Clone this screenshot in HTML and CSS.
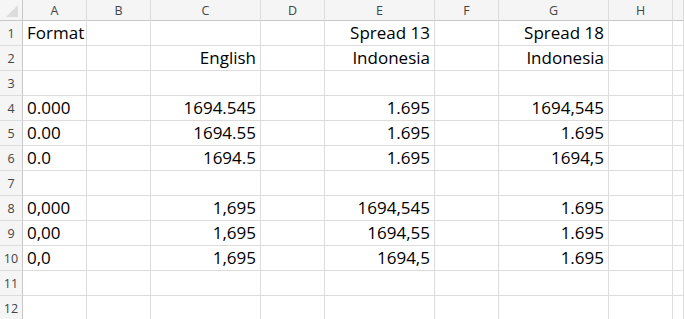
FILE: index.html
```html
<!DOCTYPE html>
<html lang="en">
<head>
  <meta charset="UTF-8">
  <title>Format spreadsheet</title>
  <link rel="stylesheet" href="styles.css">
</head>
<body>
  <div class="sheet">
    <!-- column headers -->
    <div class="row head-row">
      <div class="corner"><span class="tri"></span></div>
      <div class="col-head">A</div>
      <div class="col-head">B</div>
      <div class="col-head">C</div>
      <div class="col-head">D</div>
      <div class="col-head">E</div>
      <div class="col-head">F</div>
      <div class="col-head">G</div>
      <div class="col-head">H</div>
      <div class="col-head"></div>
    </div>

    <div class="row">
      <div class="row-head">1</div>
      <div class="cell">Format</div><div class="cell"></div><div class="cell"></div><div class="cell"></div>
      <div class="cell num">Spread 13</div><div class="cell"></div><div class="cell num">Spread 18</div><div class="cell"></div><div class="cell"></div>
    </div>
    <div class="row">
      <div class="row-head">2</div>
      <div class="cell"></div><div class="cell"></div><div class="cell num">English</div><div class="cell"></div>
      <div class="cell num">Indonesia</div><div class="cell"></div><div class="cell num">Indonesia</div><div class="cell"></div><div class="cell"></div>
    </div>
    <div class="row">
      <div class="row-head">3</div>
      <div class="cell"></div><div class="cell"></div><div class="cell"></div><div class="cell"></div>
      <div class="cell"></div><div class="cell"></div><div class="cell"></div><div class="cell"></div><div class="cell"></div>
    </div>
    <div class="row">
      <div class="row-head">4</div>
      <div class="cell">0.000</div><div class="cell"></div><div class="cell num">1694.545</div><div class="cell"></div>
      <div class="cell num">1.695</div><div class="cell"></div><div class="cell num">1694,545</div><div class="cell"></div><div class="cell"></div>
    </div>
    <div class="row">
      <div class="row-head">5</div>
      <div class="cell">0.00</div><div class="cell"></div><div class="cell num">1694.55</div><div class="cell"></div>
      <div class="cell num">1.695</div><div class="cell"></div><div class="cell num">1.695</div><div class="cell"></div><div class="cell"></div>
    </div>
    <div class="row">
      <div class="row-head">6</div>
      <div class="cell">0.0</div><div class="cell"></div><div class="cell num">1694.5</div><div class="cell"></div>
      <div class="cell num">1.695</div><div class="cell"></div><div class="cell num">1694,5</div><div class="cell"></div><div class="cell"></div>
    </div>
    <div class="row">
      <div class="row-head">7</div>
      <div class="cell"></div><div class="cell"></div><div class="cell"></div><div class="cell"></div>
      <div class="cell"></div><div class="cell"></div><div class="cell"></div><div class="cell"></div><div class="cell"></div>
    </div>
    <div class="row">
      <div class="row-head">8</div>
      <div class="cell">0,000</div><div class="cell"></div><div class="cell num">1,695</div><div class="cell"></div>
      <div class="cell num">1694,545</div><div class="cell"></div><div class="cell num">1.695</div><div class="cell"></div><div class="cell"></div>
    </div>
    <div class="row">
      <div class="row-head">9</div>
      <div class="cell">0,00</div><div class="cell"></div><div class="cell num">1,695</div><div class="cell"></div>
      <div class="cell num">1694,55</div><div class="cell"></div><div class="cell num">1.695</div><div class="cell"></div><div class="cell"></div>
    </div>
    <div class="row">
      <div class="row-head">10</div>
      <div class="cell">0,0</div><div class="cell"></div><div class="cell num">1,695</div><div class="cell"></div>
      <div class="cell num">1694,5</div><div class="cell"></div><div class="cell num">1.695</div><div class="cell"></div><div class="cell"></div>
    </div>
    <div class="row">
      <div class="row-head">11</div>
      <div class="cell"></div><div class="cell"></div><div class="cell"></div><div class="cell"></div>
      <div class="cell"></div><div class="cell"></div><div class="cell"></div><div class="cell"></div><div class="cell"></div>
    </div>
    <div class="row">
      <div class="row-head">12</div>
      <div class="cell"></div><div class="cell"></div><div class="cell"></div><div class="cell"></div>
      <div class="cell"></div><div class="cell"></div><div class="cell"></div><div class="cell"></div><div class="cell"></div>
    </div>
  </div>
</body>
</html>
```

FILE: styles.css
```css
body {
  margin: 0;
  background-color: white;
  font-family: "Open Sans", "Noto Sans", sans-serif;
  overflow: hidden;
}

.sheet {
  width: 684px;
}

.row {
  display: grid;
  grid-template-columns: 23px 64px 64px 110px 64px 110px 64px 110px 64px 1fr;
  height: 25px;
}

.head-row {
  height: 21px;
  background-color: #f5f5f5;
}

.corner {
  position: relative;
  border-right: 1px solid #c8c8c8;
  border-bottom: 1px solid #c8c8c8;
}

.tri {
  position: absolute;
  right: 4px;
  bottom: 3px;
  width: 12px;
  height: 12px;
  background-color: #dcdcdc;
  clip-path: polygon(100% 0, 100% 100%, 0 100%);
}

.col-head {
  display: flex;
  align-items: center;
  justify-content: center;
  font-size: 12.5px;
  color: #444;
  border-right: 1px solid #dcdcdc;
  border-bottom: 1px solid #c8c8c8;
}

.row-head {
  display: flex;
  align-items: flex-end;
  justify-content: center;
  padding-bottom: 3px;
  font-size: 12.5px;
  color: #444;
  background-color: #f5f5f5;
  border-right: 1px solid #c8c8c8;
  border-bottom: 1px solid #dcdcdc;
}

.cell {
  display: flex;
  align-items: flex-end;
  padding: 0 4px 2px 4px;
  font-size: 17px;
  line-height: 20px;
  color: #000;
  white-space: nowrap;
  border-right: 1px solid #dcdcdc;
  border-bottom: 1px solid #dcdcdc;
}

.num {
  justify-content: flex-end;
}
```
